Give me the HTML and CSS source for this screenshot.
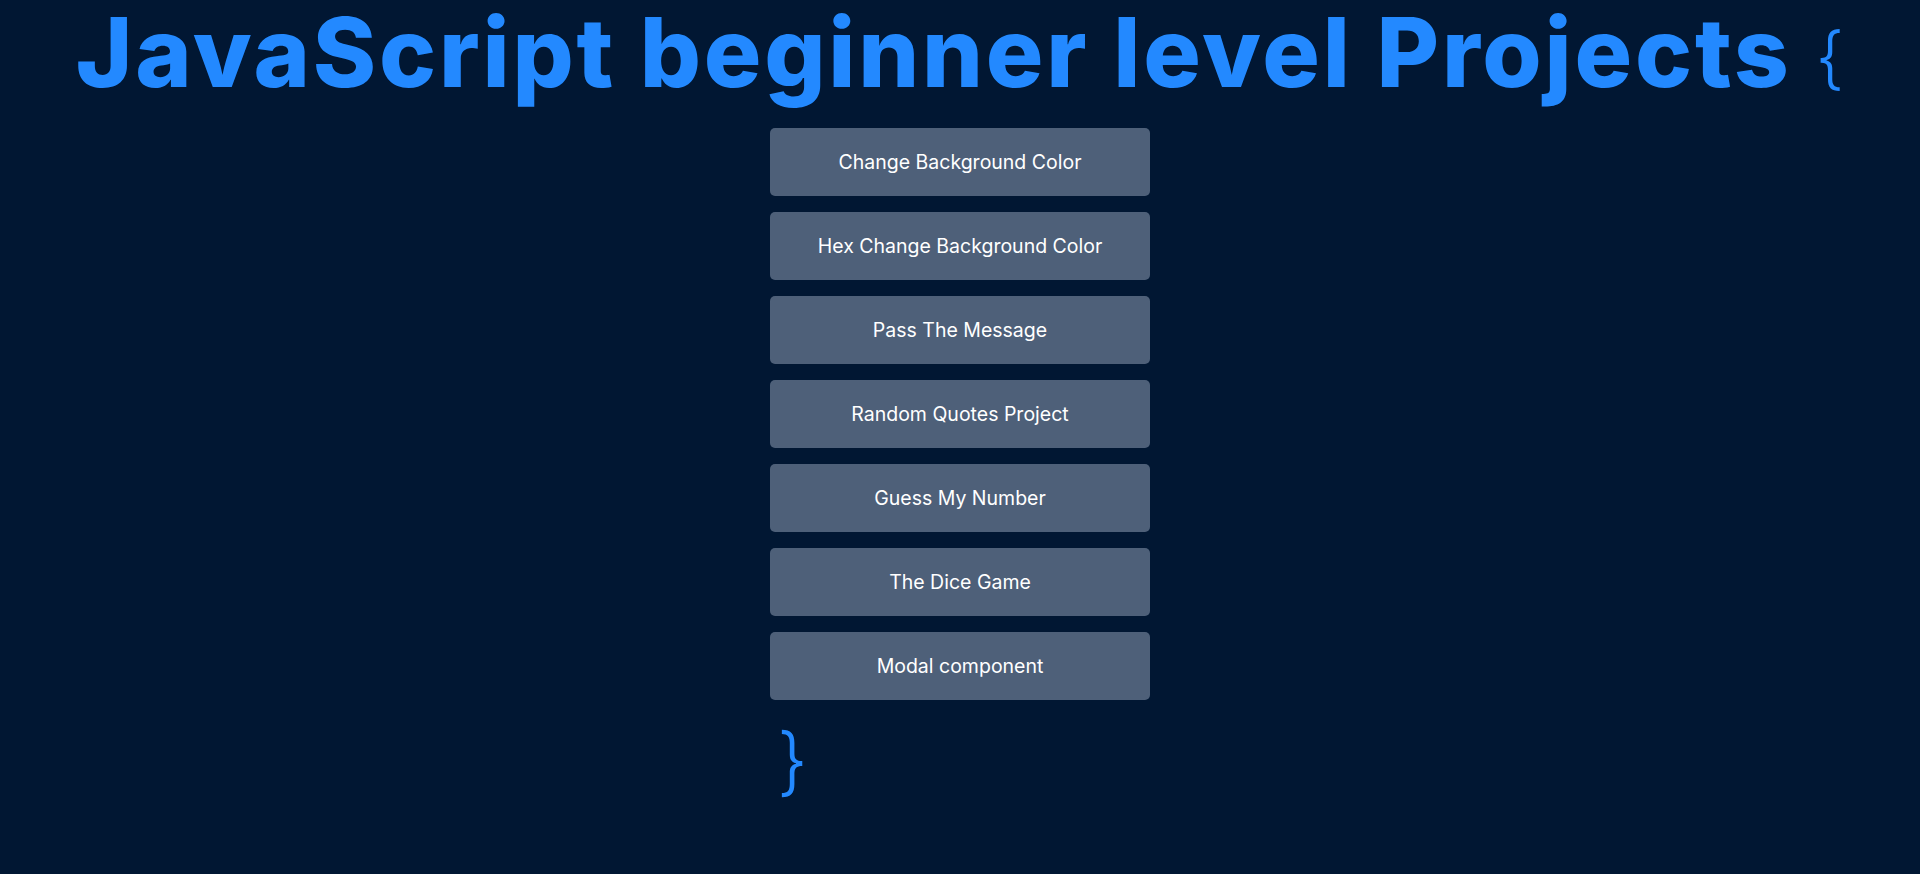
FILE: index.html
```html
<!DOCTYPE html>
<html lang="en">
<head>
<meta charset="utf-8">
<title>JavaScript beginner level Projects</title>
<link rel="stylesheet" href="styles.css">
</head>
<body>
<h1 class="title">JavaScript beginner level Projects <span class="brace">{</span></h1>
<main class="projects">
  <a class="project" href="#">Change Background Color</a>
  <a class="project" href="#">Hex Change Background Color</a>
  <a class="project" href="#">Pass The Message</a>
  <a class="project" href="#">Random Quotes Project</a>
  <a class="project" href="#">Guess My Number</a>
  <a class="project" href="#">The Dice Game</a>
  <a class="project" href="#">Modal component</a>
  <div class="closing"><span class="brace">}</span></div>
</main>
</body>
</html>
```
FILE: styles.css
```css
html, body {
  margin: 0;
  padding: 0;
}
body {
  background: #011733;
  font-family: Inter, "Liberation Sans", sans-serif;
  min-height: 874px;
}
.title {
  margin: 0;
  text-align: center;
  color: #2389ff;
  font-size: 96px;
  font-weight: 800;
  line-height: 1.1;
  letter-spacing: 2.8px;
}
.title .brace {
  font-size: 69px;
  font-weight: 300;
  letter-spacing: 0;
  vertical-align: 5px;
}
.projects {
  display: flex;
  flex-direction: column;
  align-items: center;
  gap: 16px;
  margin-top: 22px;
}
.project {
  width: 380px;
  height: 68px;
  display: flex;
  align-items: center;
  justify-content: center;
  background: #4e6079;
  border-radius: 5px;
  color: #ffffff;
  text-decoration: none;
  font-size: 19.5px;
}
.closing {
  width: 380px;
  padding-left: 7px;
  padding-top: 7px;
  box-sizing: border-box;
  color: #2389ff;
  font-size: 74px;
  font-weight: 300;
  line-height: 1;
}
```
